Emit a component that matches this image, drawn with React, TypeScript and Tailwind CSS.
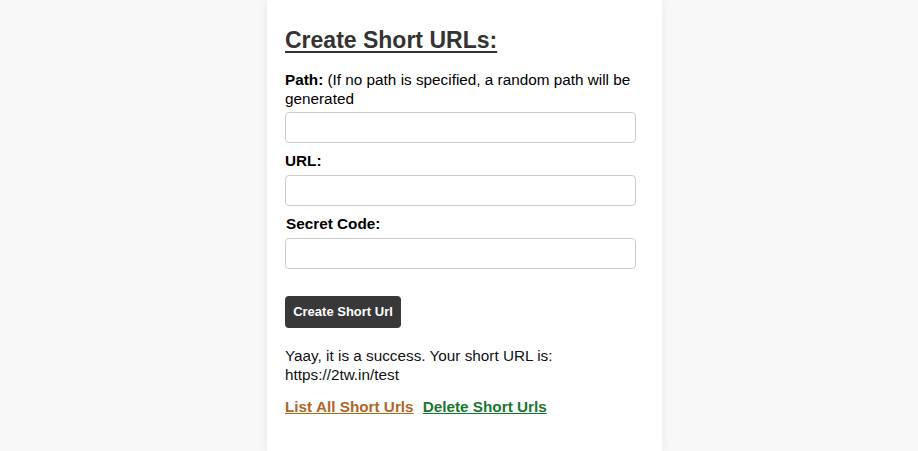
import React from "react";

function Field({ label }: { label: React.ReactNode }) {
  return <label className="block text-[15.3px] leading-[19px] text-black">{label}</label>;
}

export default function App() {
  return (
    <div
      className="flex min-h-screen justify-center bg-[#f8f8f8] pl-[11px]"
      style={{ fontFamily: '"Liberation Sans", Arial, sans-serif' }}
    >
      <div className="min-h-[451px] w-[395px] bg-white px-[18px] pt-[26px] shadow-[0_0_10px_rgba(0,0,0,0.08)]">
        <h2 className="text-[23px] font-bold leading-[28px] text-[#333] underline underline-offset-[3px]">
          Create Short URLs:
        </h2>

        <div className="mt-[16px]">
          <Field
            label={
              <>
                <b>Path:</b> (If no path is specified, a random path will be generated
              </>
            }
          />
          <input className="mt-[4px] block h-[31px] w-[351px] rounded-[4px] border border-[#ccc] px-2 outline-none" />
        </div>

        <div className="mt-[8px]">
          <Field label={<b>URL:</b>} />
          <input className="mt-[5px] block h-[31px] w-[351px] rounded-[4px] border border-[#ccc] px-2 outline-none" />
        </div>

        <div className="mt-[8px]">
          <Field label={<b className="pl-px">Secret Code:</b>} />
          <input className="mt-[5px] block h-[31px] w-[351px] rounded-[4px] border border-[#ccc] px-2 outline-none" />
        </div>

        <button className="mt-[27px] h-[32px] w-[116px] rounded-[4px] bg-[#383838] text-[13px] font-bold text-white">
          Create Short Url
        </button>

        <p className="mt-[18px] text-[15.3px] leading-[19px] text-[#111]">
          Yaay, it is a success. Your short URL is:
          <br />
          https://2tw.in/test
        </p>

        <div className="mt-[14px] flex gap-[9px] text-[15.3px] font-bold leading-[18px]">
          <a href="#" className="text-[#b5651d] underline">
            List All Short Urls
          </a>
          <a href="#" className="text-[#157a2c] underline">
            Delete Short Urls
          </a>
        </div>
      </div>
    </div>
  );
}
